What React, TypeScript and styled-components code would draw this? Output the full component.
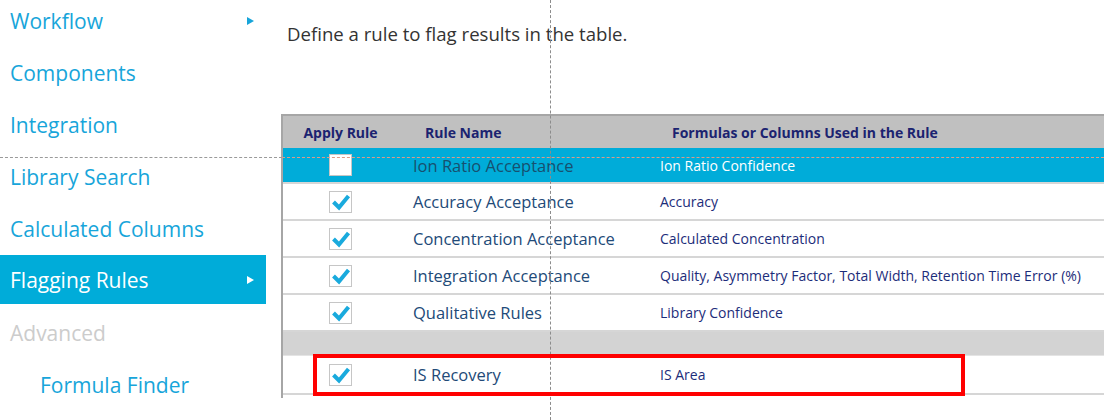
import React from "react";
import styled, { createGlobalStyle, css } from "styled-components";

const GlobalStyle = createGlobalStyle`
  html, body { margin: 0; padding: 0; background: #ffffff; overflow: hidden; }
  body { font-family: "Open Sans", "Noto Sans", Arial, sans-serif; }
  * { box-sizing: border-box; }
`;

const Page = styled.div`
  position: relative;
  width: 1104px;
  height: 420px;
  overflow: hidden;
  display: flex;
  background: #fff;
`;

const Sidebar = styled.nav`
  width: 266px;
  flex: 0 0 266px;
  display: flex;
  flex-direction: column;
  margin-top: -5px;
`;

const NavItem = styled.div<{ $selected?: boolean; $disabled?: boolean; $indent?: number }>`
  height: 52px;
  display: flex;
  align-items: center;
  justify-content: space-between;
  padding-left: ${(p) => p.$indent ?? 10}px;
  padding-right: 12px;
  font-size: 21px;
  color: ${(p) => (p.$disabled ? "#cccccc" : "#17a5da")};
  white-space: nowrap;
  ${(p) =>
    p.$selected &&
    css`
      background: #00acd9;
      color: #ffffff;
      height: 49px;
      margin: 0 0 3px;
    `}
`;

const Arrow = styled.span<{ $light?: boolean }>`
  width: 0;
  height: 0;
  border-top: 4.5px solid transparent;
  border-bottom: 4.5px solid transparent;
  border-left: 7px solid ${(p) => (p.$light ? "#ffffff" : "#17a5da")};
`;

const Main = styled.main`
  flex: 1;
  display: flex;
  flex-direction: column;
  padding-top: 22px;
  min-width: 0;
`;

const Intro = styled.p`
  margin: 0 0 0 21px;
  font-size: 18.6px;
  line-height: 24px;
  color: #333333;
`;

const Table = styled.div`
  margin: 68px 0 0 15px;
  width: 850px;
  border-top: 2px solid #a6a6a6;
  border-left: 2px solid #a6a6a6;
  padding-bottom: 3px;
`;

const grid = css`
  display: grid;
  grid-template-columns: 115px 250px 1fr;
  align-items: center;
`;

const HeaderRow = styled.div`
  ${grid};
  height: 32px;
  background: #c0c0c0;
  font-weight: 700;
  font-size: 14px;
  color: #1b2370;
`;

const HeadCell = styled.div<{ $pad?: number; $center?: boolean }>`
  padding-left: ${(p) => p.$pad ?? 0}px;
  text-align: ${(p) => (p.$center ? "center" : "left")};
  white-space: nowrap;
`;

const Row = styled.div<{ $active?: boolean; $h?: number }>`
  ${grid};
  height: ${(p) => p.$h ?? 37}px;
  border-bottom: 2px solid #d6d6d6;
  background: ${(p) => (p.$active ? "#00acd9" : "#ffffff")};
`;

const SpacerRow = styled.div`
  height: 24px;
  background: #d3d3d3;
  border-bottom: 1px solid #e4e4e4;
`;

const CheckCell = styled.div`
  display: flex;
  justify-content: center;
`;

const Box = styled.div`
  width: 23px;
  height: 22px;
  border: 1px solid #c6c6c6;
  background: #ffffff;
  display: flex;
  align-items: center;
  justify-content: center;
`;

const RuleName = styled.div<{ $active?: boolean }>`
  padding-left: 15px;
  font-size: 16.5px;
  color: ${(p) => (p.$active ? "#17506f" : "#224a78")};
  white-space: nowrap;
`;

const Formula = styled.div<{ $active?: boolean }>`
  padding-left: 12px;
  font-size: 14px;
  color: ${(p) => (p.$active ? "#ffffff" : "#1c2d7a")};
  white-space: nowrap;
`;

const GuideH = styled.div<{ $left: number; $width: number; $color: string }>`
  position: absolute;
  top: 157px;
  left: ${(p) => p.$left}px;
  width: ${(p) => p.$width}px;
  border-top: 1px dashed ${(p) => p.$color};
  pointer-events: none;
`;

const GuideV = styled.div`
  position: absolute;
  left: 550px;
  top: 0;
  height: 420px;
  border-left: 1px dashed #8c8c8c;
  pointer-events: none;
`;

const Highlight = styled.div`
  position: absolute;
  left: 313px;
  top: 354px;
  width: 652px;
  height: 42px;
  border: 4px solid #ff0000;
  pointer-events: none;
`;

const Check = () => (
  <svg width="20" height="18" viewBox="0 0 20 18">
    <polyline
      points="2.5,9 8,14.5 17.5,3"
      fill="none"
      stroke="#19aadd"
      strokeWidth="4"
      strokeLinecap="butt"
      strokeLinejoin="miter"
    />
  </svg>
);

type Rule = { name: string; formula: string; checked: boolean; active?: boolean };

const rules: Rule[] = [
  { name: "Ion Ratio Acceptance", formula: "Ion Ratio Confidence", checked: false, active: true },
  { name: "Accuracy Acceptance", formula: "Accuracy", checked: true },
  { name: "Concentration Acceptance", formula: "Calculated Concentration", checked: true },
  {
    name: "Integration Acceptance",
    formula: "Quality, Asymmetry Factor, Total Width, Retention Time Error (%)",
    checked: true,
  },
  { name: "Qualitative Rules", formula: "Library Confidence", checked: true },
];

const RuleRow = ({ rule, h }: { rule: Rule; h?: number }) => (
  <Row $active={rule.active} $h={h}>
    <CheckCell>
      <Box>{rule.checked && <Check />}</Box>
    </CheckCell>
    <RuleName $active={rule.active}>{rule.name}</RuleName>
    <Formula $active={rule.active}>{rule.formula}</Formula>
  </Row>
);

export default function App() {
  return (
    <>
      <GlobalStyle />
      <Page>
        <Sidebar>
          <NavItem>
            Workflow
            <Arrow />
          </NavItem>
          <NavItem>Components</NavItem>
          <NavItem>Integration</NavItem>
          <NavItem>Library Search</NavItem>
          <NavItem>Calculated Columns</NavItem>
          <NavItem $selected>
            Flagging Rules
            <Arrow $light />
          </NavItem>
          <NavItem $disabled>Advanced</NavItem>
          <NavItem $indent={40}>Formula Finder</NavItem>
        </Sidebar>
        <Main>
          <Intro>Define a rule to flag results in the table.</Intro>
          <Table>
            <HeaderRow>
              <HeadCell $center>Apply Rule</HeadCell>
              <HeadCell $pad={27}>Rule Name</HeadCell>
              <HeadCell $pad={24}>Formulas or Columns Used in the Rule</HeadCell>
            </HeaderRow>
            {rules.map((r, i) => (
              <RuleRow key={r.name} rule={r} h={i === 0 ? 36 : 37} />
            ))}
            <SpacerRow />
            <RuleRow rule={{ name: "IS Recovery", formula: "IS Area", checked: true }} h={39} />
          </Table>
        </Main>
        <GuideH $left={0} $width={282} $color="#9a9a9a" />
        <GuideH $left={282} $width={822} $color="#e09a84" />
        <GuideV />
        <Highlight />
      </Page>
    </>
  );
}
